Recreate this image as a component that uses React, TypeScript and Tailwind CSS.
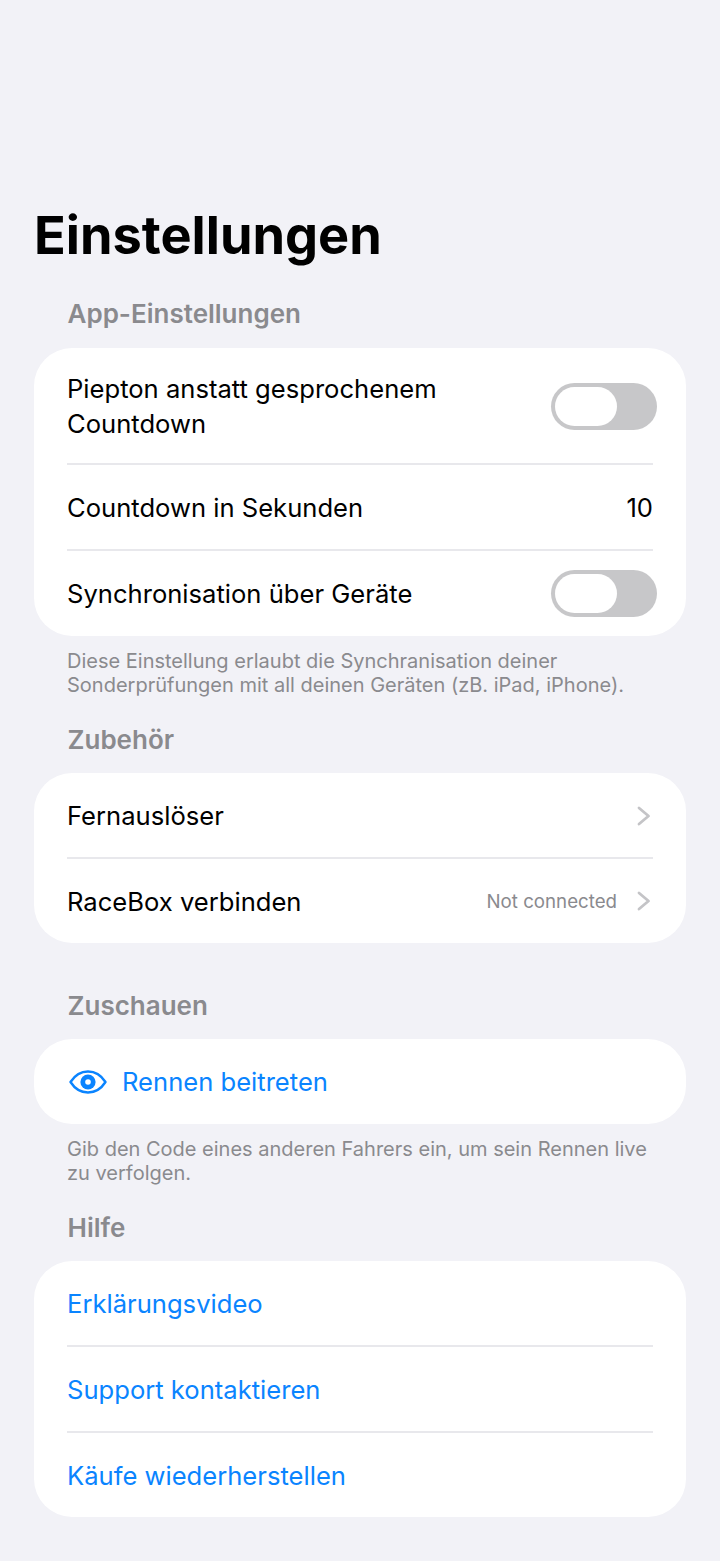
import React from 'react';

const Divider = () => <div className="h-[2px] bg-[#e8e8ec] mx-[33px]" />;

const Toggle: React.FC<{ className?: string }> = ({ className }) => (
  <div className={`w-[106px] h-[47px] rounded-full bg-[#c7c7c9] p-[4px] -mr-[4px] shrink-0 ${className ?? ''}`}>
    <div className="w-[62px] h-[39px] rounded-full bg-white" />
  </div>
);

const SectionTitle: React.FC<{ children: React.ReactNode; className?: string }> = ({ children, className }) => (
  <div className={`pl-[33.5px] text-[26px] leading-[30px] font-semibold text-[#8a8a8e] ${className ?? ''}`}>{children}</div>
);

const Footnote: React.FC<{ children: React.ReactNode }> = ({ children }) => (
  <p className="px-[33px] mt-[14px] text-[20px] leading-[23.5px] text-[#8a8a8e]">{children}</p>
);

const Row: React.FC<{ label: string; blue?: boolean; className?: string; children?: React.ReactNode }> = ({
  label,
  blue,
  className,
  children,
}) => (
  <div className={`flex items-center justify-between px-[33px] ${className ?? 'h-[84px] pt-[1px]'}`}>
    <span className={blue ? 'text-[#0a84ff]' : 'text-black'}>{label}</span>
    {children}
  </div>
);

// Disclosure indicator used on navigation rows
const Chevron = () => (
  <svg viewBox="0 0 14 20" className="w-[14px] h-[20px] mr-[2px]" fill="none">
    <path d="M2 2l9.5 8L2 18" stroke="#c4c4c7" strokeWidth="2.8" strokeLinecap="round" strokeLinejoin="round" />
  </svg>
);

const EyeIcon = () => (
  <svg viewBox="0 0 38 24" className="w-[38px] h-[24px] ml-[2px]" fill="none">
    <path d="M1.5 12C6 5 12 1.5 19 1.5S32 5 36.5 12C32 19 26 22.5 19 22.5S6 19 1.5 12Z" stroke="#0a84ff" strokeWidth="2.4" strokeLinejoin="round" />
    <circle cx="19" cy="12" r="7.6" fill="#0a84ff" />
    <circle cx="19" cy="12" r="2.8" fill="#ffffff" />
  </svg>
);

export default function App() {
  return (
    <div className="w-[720px] h-[1561px] overflow-hidden bg-[#f2f2f7] font-['Inter',sans-serif] text-[25.6px] leading-[35px] px-[34px] pt-[204px]">
      <h1 className="text-[52.3px] leading-[62px] font-bold text-black">Einstellungen</h1>

      <SectionTitle className="mt-[33px]">App-Einstellungen</SectionTitle>
      <div className="mt-[19px] rounded-[38px] bg-white">
        <div className="h-[115px] flex items-center justify-between px-[33px]">
          <span className="w-[445px] text-black">Piepton anstatt gesprochenem Countdown</span>
          <Toggle className="mt-[1px]" />
        </div>
        <Divider />
        <Row label="Countdown in Sekunden">
          <span className="text-black">10</span>
        </Row>
        <Divider />
        <Row label="Synchronisation über Geräte" className="h-[85px]">
          <Toggle />
        </Row>
      </div>
      <Footnote>
        Diese Einstellung erlaubt die Synchranisation deiner Sonderprüfungen mit all deinen Geräten (zB. iPad, iPhone).
      </Footnote>

      <SectionTitle className="mt-[28px]">Zubehör</SectionTitle>
      <div className="mt-[18px] rounded-[38px] bg-white">
        <Row label="Fernauslöser">
          <Chevron />
        </Row>
        <Divider />
        <Row label="RaceBox verbinden" className="h-[84px]">
          <div className="flex items-center gap-[20px]">
            <span className="text-[18.7px] text-[#8a8a8e]">Not connected</span>
            <Chevron />
          </div>
        </Row>
      </div>

      <SectionTitle className="mt-[48px]">Zuschauen</SectionTitle>
      <div className="mt-[18px] rounded-[38px] bg-white h-[85px] flex items-center gap-[15px] px-[33px]">
        <EyeIcon />
        <span className="text-[#0a84ff]">Rennen beitreten</span>
      </div>
      <Footnote>Gib den Code eines anderen Fahrers ein, um sein Rennen live zu verfolgen.</Footnote>

      <SectionTitle className="mt-[28px]">Hilfe</SectionTitle>
      <div className="mt-[18px] rounded-[38px] bg-white">
        <Row label="Erklärungsvideo" blue />
        <Divider />
        <Row label="Support kontaktieren" blue />
        <Divider />
        <Row label="Käufe wiederherstellen" blue className="h-[84px]" />
      </div>
    </div>
  );
}
